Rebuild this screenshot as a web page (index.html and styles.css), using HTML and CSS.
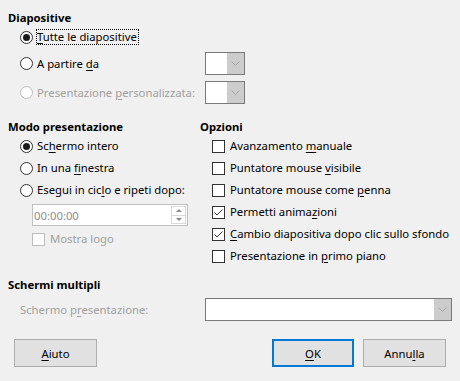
FILE: index.html
```html
<!DOCTYPE html>
<html lang="it">
<head>
<meta charset="utf-8">
<title>Presentazione</title>
<link rel="stylesheet" href="styles.css">
</head>
<body>
<div class="dialog">
  <section class="group slides">
    <div class="heading">Diapositive</div>
    <div class="row">
      <span class="radio checked"></span>
      <span class="label focus"><u>T</u>utte le diapositive</span>
    </div>
    <div class="row combo-row">
      <span class="opt"><span class="radio"></span><span class="label">A partire <u>d</u>a</span></span>
      <span class="combo small"><span class="field"></span><span class="drop"><svg width="9" height="5" viewBox="0 0 9 5"><polyline points="0.5,0.5 4.5,4.5 8.5,0.5" fill="none" stroke="#a5a5a5" stroke-width="1"/></svg></span></span>
    </div>
    <div class="row combo-row second">
      <span class="opt disabled"><span class="radio"></span><span class="label">Presentazione <u>p</u>ersonalizzata:</span></span>
      <span class="combo small"><span class="field"></span><span class="drop"><svg width="9" height="5" viewBox="0 0 9 5"><polyline points="0.5,0.5 4.5,4.5 8.5,0.5" fill="none" stroke="#a5a5a5" stroke-width="1"/></svg></span></span>
    </div>
  </section>

  <div class="columns">
    <section class="group mode">
      <div class="heading">Modo presentazione</div>
      <div class="row"><span class="radio checked"></span><span class="label">Sc<u>h</u>ermo intero</span></div>
      <div class="row"><span class="radio"></span><span class="label">In una <u>f</u>inestra</span></div>
      <div class="row"><span class="radio"></span><span class="label">Esegui in cic<u>l</u>o e ripeti dopo:</span></div>
      <div class="spin">
        <span class="spin-text">00:00:00</span>
        <span class="spin-btns">
          <span class="arrow up"></span>
          <span class="arrow down"></span>
        </span>
      </div>
      <div class="row sub disabled"><span class="check"></span><span class="label">Mostra logo</span></div>
    </section>

    <section class="group options">
      <div class="heading">Opzioni</div>
      <div class="row"><span class="check"></span><span class="label">Avanzamento <u>m</u>anuale</span></div>
      <div class="row"><span class="check"></span><span class="label">Puntatore mouse <u>v</u>isibile</span></div>
      <div class="row"><span class="check"></span><span class="label">Puntatore mouse come <u>p</u>enna</span></div>
      <div class="row"><span class="check checked"><svg width="11" height="11" viewBox="0 0 11 11"><polyline points="1.5,5.5 4,8 9.5,2.5" fill="none" stroke="#333" stroke-width="1"/></svg></span><span class="label">Permetti anima<u>z</u>ioni</span></div>
      <div class="row"><span class="check checked"><svg width="11" height="11" viewBox="0 0 11 11"><polyline points="1.5,5.5 4,8 9.5,2.5" fill="none" stroke="#333" stroke-width="1"/></svg></span><span class="label"><u>C</u>ambio diapositiva dopo clic sullo sfondo</span></div>
      <div class="row"><span class="check"></span><span class="label">Presentazione in <u>p</u>rimo piano</span></div>
    </section>
  </div>

  <section class="group multi">
    <div class="heading">Schermi multipli</div>
    <div class="row combo-row">
      <span class="opt disabled"><span class="label">Schermo p<u>r</u>esentazione:</span></span>
      <span class="combo wide"><span class="field"></span><span class="drop"><svg width="9" height="5" viewBox="0 0 9 5"><polyline points="0.5,0.5 4.5,4.5 8.5,0.5" fill="none" stroke="#a5a5a5" stroke-width="1"/></svg></span></span>
    </div>
  </section>

  <div class="buttons">
    <button class="btn"><u>A</u>iuto</button>
    <span class="spacer"></span>
    <button class="btn default"><u>O</u>K</button>
    <button class="btn">Annu<u>l</u>la</button>
  </div>
</div>
</body>
</html>
```

FILE: styles.css
```css
html, body {
  margin: 0;
  padding: 0;
  background: #f0f0f0;
}

body {
  font-family: "Noto Sans", "Open Sans", sans-serif;
  font-size: 11.3px;
  color: #000;
}

.dialog {
  width: 460px;
  height: 381px;
  box-sizing: border-box;
  padding: 10px 8px 0 8px;
  display: flex;
  flex-direction: column;
}

u {
  text-decoration: underline;
  text-underline-offset: 2px;
}

.heading {
  font-weight: bold;
  height: 16px;
  line-height: 16px;
}

.group {
  display: flex;
  flex-direction: column;
}

.row {
  display: flex;
  align-items: center;
  height: 22px;
  padding-left: 12px;
}

.label {
  line-height: 14px;
  white-space: nowrap;
}

.radio + .label {
  margin-left: 4px;
}

.check + .label {
  margin-left: 5px;
}

.focus {
  outline: 1px dotted #000;
  outline-offset: 0;
  padding: 0 1px 0 0;
}

/* radio buttons */
.radio {
  width: 13px;
  height: 13px;
  box-sizing: border-box;
  border: 1px solid #333;
  border-radius: 50%;
  background: #fff;
  flex: none;
  display: flex;
  align-items: center;
  justify-content: center;
}

.radio.checked::after {
  content: "";
  width: 7px;
  height: 7px;
  border-radius: 50%;
  background: #1a1a1a;
}

/* checkboxes */
.check {
  width: 13px;
  height: 13px;
  box-sizing: border-box;
  border: 1px solid #333;
  background: #fff;
  flex: none;
  display: flex;
  align-items: center;
  justify-content: center;
}

.disabled {
  color: #a0a0a0;
}

.disabled .radio,
.disabled .check {
  border-color: #bcbcbc;
}

/* combo boxes */
.combo-row {
  height: 23px;
  margin-top: 4px;
}

.combo-row.second {
  margin-top: 6px;
}

.opt {
  display: flex;
  align-items: center;
  width: 185px;
  flex: none;
}

.combo {
  display: flex;
  height: 23px;
  box-sizing: border-box;
  border: 1px solid #7a7a7a;
  background: #fff;
}

.combo.small {
  width: 40px;
}

.combo.wide {
  width: 247px;
}

.combo .field {
  flex: 1;
}

.combo .drop {
  width: 17px;
  background: #cccccc;
  display: flex;
  align-items: center;
  justify-content: center;
}

/* two columns */
.columns {
  display: grid;
  grid-template-columns: 192px 1fr;
  margin-top: 15px;
}

.spin {
  margin: 3px 0 2px 24px;
  width: 156px;
  height: 22px;
  box-sizing: border-box;
  border: 1px solid #bfbfbf;
  background: #fff;
  display: flex;
  align-items: center;
}

.spin-text {
  flex: 1;
  color: #8c8c8c;
  padding-left: 1px;
}

.spin-btns {
  width: 15px;
  height: 18px;
  margin-right: 1px;
  box-sizing: border-box;
  border: 1px solid #dadada;
  display: flex;
  flex-direction: column;
}

.arrow {
  flex: 1;
  display: flex;
  align-items: center;
  justify-content: center;
}

.arrow.up {
  border-bottom: 1px solid #dadada;
}

.arrow::after {
  content: "";
  border-left: 3px solid transparent;
  border-right: 3px solid transparent;
}

.arrow.up::after {
  border-bottom: 3px solid #8a8a8a;
}

.arrow.down::after {
  border-top: 3px solid #8a8a8a;
}

.row.sub {
  padding-left: 24px;
}

.options .row {
  padding-left: 12px;
}

/* multiple screens */
.multi {
  margin-top: 10px;
}

.multi .combo-row {
  margin-top: 5px;
}

/* buttons */
.buttons {
  display: flex;
  gap: 9px;
  margin-top: 18px;
  padding: 0 6px;
}

.spacer {
  flex: 1;
}

.btn {
  font: inherit;
  color: #000;
  height: 28px;
  width: 83px;
  box-sizing: border-box;
  border: 1px solid #adadad;
  background: #e1e1e1;
  padding: 0;
  margin: 0;
}

.btn.default {
  width: 82px;
  border: 2px solid #0078d7;
}
```
